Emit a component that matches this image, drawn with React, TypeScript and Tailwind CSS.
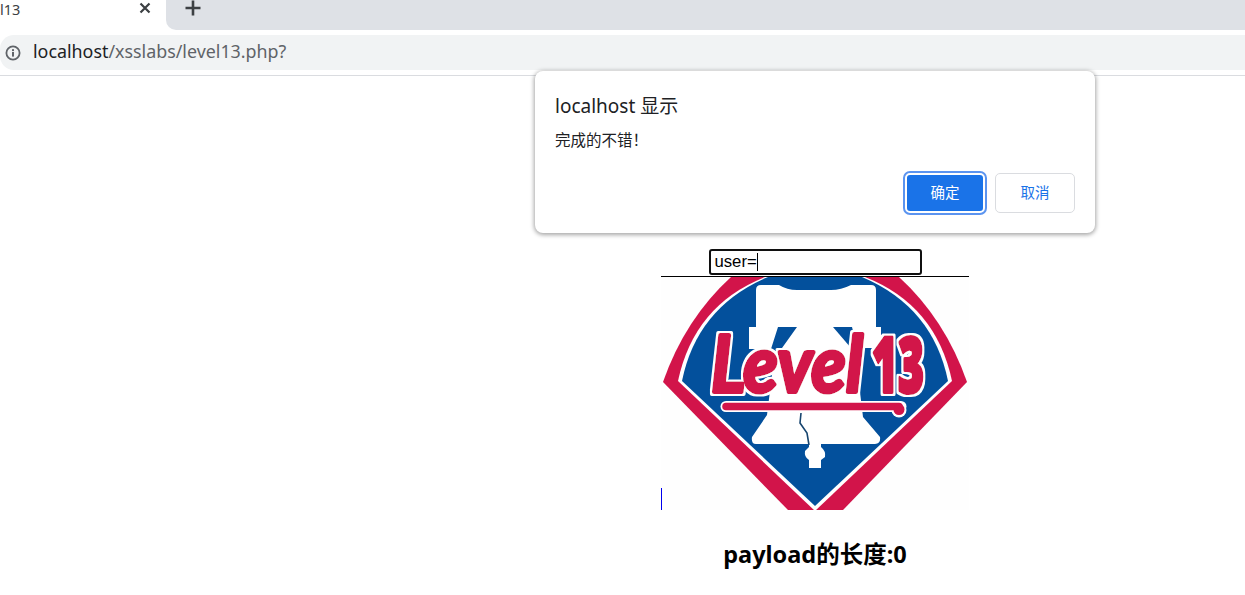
import React from "react";

const cjk = '"Noto Sans CJK SC", sans-serif';

function Logo() {
  return (
    <svg width="308" height="233" viewBox="0 0 308 233" className="block">
      <defs>
        <filter id="halo" x="-10%" y="-10%" width="120%" height="120%">
          <feMorphology in="SourceAlpha" operator="dilate" radius="2" result="grown" />
          <feFlood floodColor="#ffffff" />
          <feComposite in2="grown" operator="in" result="edge" />
          <feMerge>
            <feMergeNode in="edge" />
            <feMergeNode in="SourceGraphic" />
          </feMerge>
        </filter>
      </defs>
      <rect width="308" height="233" fill="#fefefe" />
      {/* red diamond, clipped at the image's lower edge */}
      <path d="M70 0 L238 0 Q284 42 306 105 L182 233 L127 233 L2 105 Q24 42 70 0 Z" fill="#d2144a" />
      {/* white keyline */}
      <path d="M104 0 L204 0 Q275 28 291 104 L154 234 L17 104 Q33 28 104 0 Z" fill="#ffffff" />
      {/* blue field */}
      <path d="M107 0 L201 0 Q272 30 287 104 L154 229 L21 104 Q36 30 107 0 Z" fill="#03509c" />
      {/* bell crown and shoulders */}
      <path
        d="M95 13 Q95 8 100 8 L118 8 Q126 13 136 13 L170 13 Q180 13 190 8 L210 8 Q215 8 215 13 L215 50 L220 50 L220 71 L190 71 L196 90 L202 140 L219 160 Q220 167 214 167 L169 167 L163 167 L146 167 L95 167 Q90 167 91 160 L106 138 L112 90 L108 72 L88 72 L88 50 L95 50 Z"
        fill="#ffffff"
      />
      {/* notches in the crown */}
      <path d="M117 50 L136 50 L116 78 L105 78 L105 72 L110 72 Z" fill="#03509c" />
      <path d="M172 50 L191 50 L196 71 L190 71 Z" fill="#03509c" />
      {/* clapper */}
      <path d="M148 167 L160 167 L160 170 Q165 174 164 180 L160 183 L160 191 L148 191 L148 183 Q143 180 144 174 L148 170 Z" fill="#ffffff" />
      <path d="M140 136 L139 146 L146 156 L148 168" fill="none" stroke="#17456f" strokeWidth="1.6" />
      {/* underline swash */}
      <path d="M65 129.5 H240" stroke="#ffffff" strokeWidth="11" strokeLinecap="round" />
      <circle cx="238" cy="133" r="7.5" fill="#ffffff" />
      <path d="M65 129.5 H238" stroke="#d2144a" strokeWidth="7.5" strokeLinecap="round" />
      <circle cx="238" cy="132.5" r="5.5" fill="#d2144a" />
      {/* wordmark */}
      <g filter="url(#halo)" fill="#d2144a" stroke="#d2144a" strokeWidth="4" strokeLinejoin="round" strokeLinecap="round">
        <text
          x="50"
          y="115"
          fontFamily='Lato, sans-serif'
          fontWeight="700"
          fontStyle="italic"
          fontSize="78"
          textLength="152"
          lengthAdjust="spacingAndGlyphs"
        >
          Level
        </text>
        <text
          x="211"
          y="115"
          fontFamily='"Open Sans", sans-serif'
          fontWeight="800"
          fontSize="76"
          textLength="52"
          lengthAdjust="spacingAndGlyphs"
        >
          13
        </text>
      </g>
    </svg>
  );
}

export default function App() {
  return (
    <div className="relative h-[595px] w-[1245px] overflow-hidden bg-white" style={{ fontFamily: '"Liberation Sans", sans-serif' }}>
      {/* tab strip */}
      <div className="flex h-[30px] items-stretch bg-white">
        <div className="flex w-[166px] items-start bg-white">
          <span className="w-[139px] text-[14.5px] leading-[18px] text-[#3c4043]" style={{ fontFamily: '"Noto Sans", sans-serif' }}>
            l13
          </span>
          <svg width="12" height="12" viewBox="0 0 12 12" className="mt-[2px]">
            <path d="M1.5 1.5 L10.5 10.5 M10.5 1.5 L1.5 10.5" stroke="#3c4043" strokeWidth="2.2" />
          </svg>
        </div>
        <div className="flex flex-1 items-start rounded-bl-[10px] bg-[#dee1e6] pl-[19px] pt-0">
          <svg width="16" height="16" viewBox="0 0 16 16">
            <path d="M8 0.5 V15.5 M0.5 8 H15.5" stroke="#3c4043" strokeWidth="2.6" />
          </svg>
        </div>
      </div>
      {/* address bar */}
      <div className="flex h-[46px] items-start border-b border-[#dadce0] bg-white pt-[5px]">
        <div className="flex h-[35px] flex-1 items-center rounded-l-[14px] bg-[#f1f3f4]">
          <svg width="16" height="16" viewBox="0 0 16 16" className="ml-[5px]">
            <circle cx="8" cy="8" r="6.6" fill="none" stroke="#5f6368" strokeWidth="1.8" />
            <rect x="7" y="7" width="2" height="4.6" fill="#5f6368" />
            <rect x="7" y="4.2" width="2" height="1.9" fill="#5f6368" />
          </svg>
          <div className="mb-[1px] ml-[12px] text-[17.85px] leading-none text-[#5f6368]" style={{ fontFamily: '"Noto Sans", sans-serif' }}>
            <span className="text-[#202124]">localhost</span>/xsslabs/level13.php?
          </div>
        </div>
      </div>
      {/* page */}
      <div className="flex w-[1630px] flex-col items-center pt-[173px]">
        <div className="flex w-[308px] flex-col items-center">
          <div className="mb-px flex h-[26px] w-[213px] items-center rounded-[3px] border-2 border-[#101010] pl-[3px] text-[16.7px] leading-none text-black">
            <span className="ml-px">user=</span>
            <span className="h-[18px] w-px bg-black" />
          </div>
          <div className="h-px w-full bg-black" />
          <div className="relative">
            <Logo />
            <div className="absolute bottom-0 left-0 h-[22px] w-px bg-[#0000ee]" />
          </div>
        </div>
        <h2 className="mt-[27px] text-[23.5px] font-bold leading-[34px] text-black" style={{ fontFamily: `"Noto Sans", ${cjk}` }}>
          payload的长度:0
        </h2>
      </div>
      {/* alert dialog */}
      <div
        className="absolute left-[535px] top-[71px] h-[162px] w-[560px] rounded-[8px] bg-white pl-[20px] pt-[22px] shadow-[0_1px_4px_1px_rgba(0,0,0,0.35)]"
        style={{ fontFamily: `"Noto Sans", ${cjk}` }}
      >
        <div className="text-[19px] leading-[26px] text-[#202124]">localhost 显示</div>
        <div className="mt-[11px] text-[15.5px] leading-[20px] text-[#202124]">完成的不错！</div>
        <div className="mt-[23px] flex justify-end gap-[10px] pr-[20px]">
          <button className="h-[40px] w-[80px] rounded-[5px] border-2 border-white bg-[#1a73e8] text-[14.5px] text-white outline-2 outline-[#5b94f0]">
            确定
          </button>
          <button className="h-[40px] w-[80px] rounded-[5px] border border-[#dadce0] bg-white text-[14.5px] text-[#1a73e8]">取消</button>
        </div>
      </div>
    </div>
  );
}
